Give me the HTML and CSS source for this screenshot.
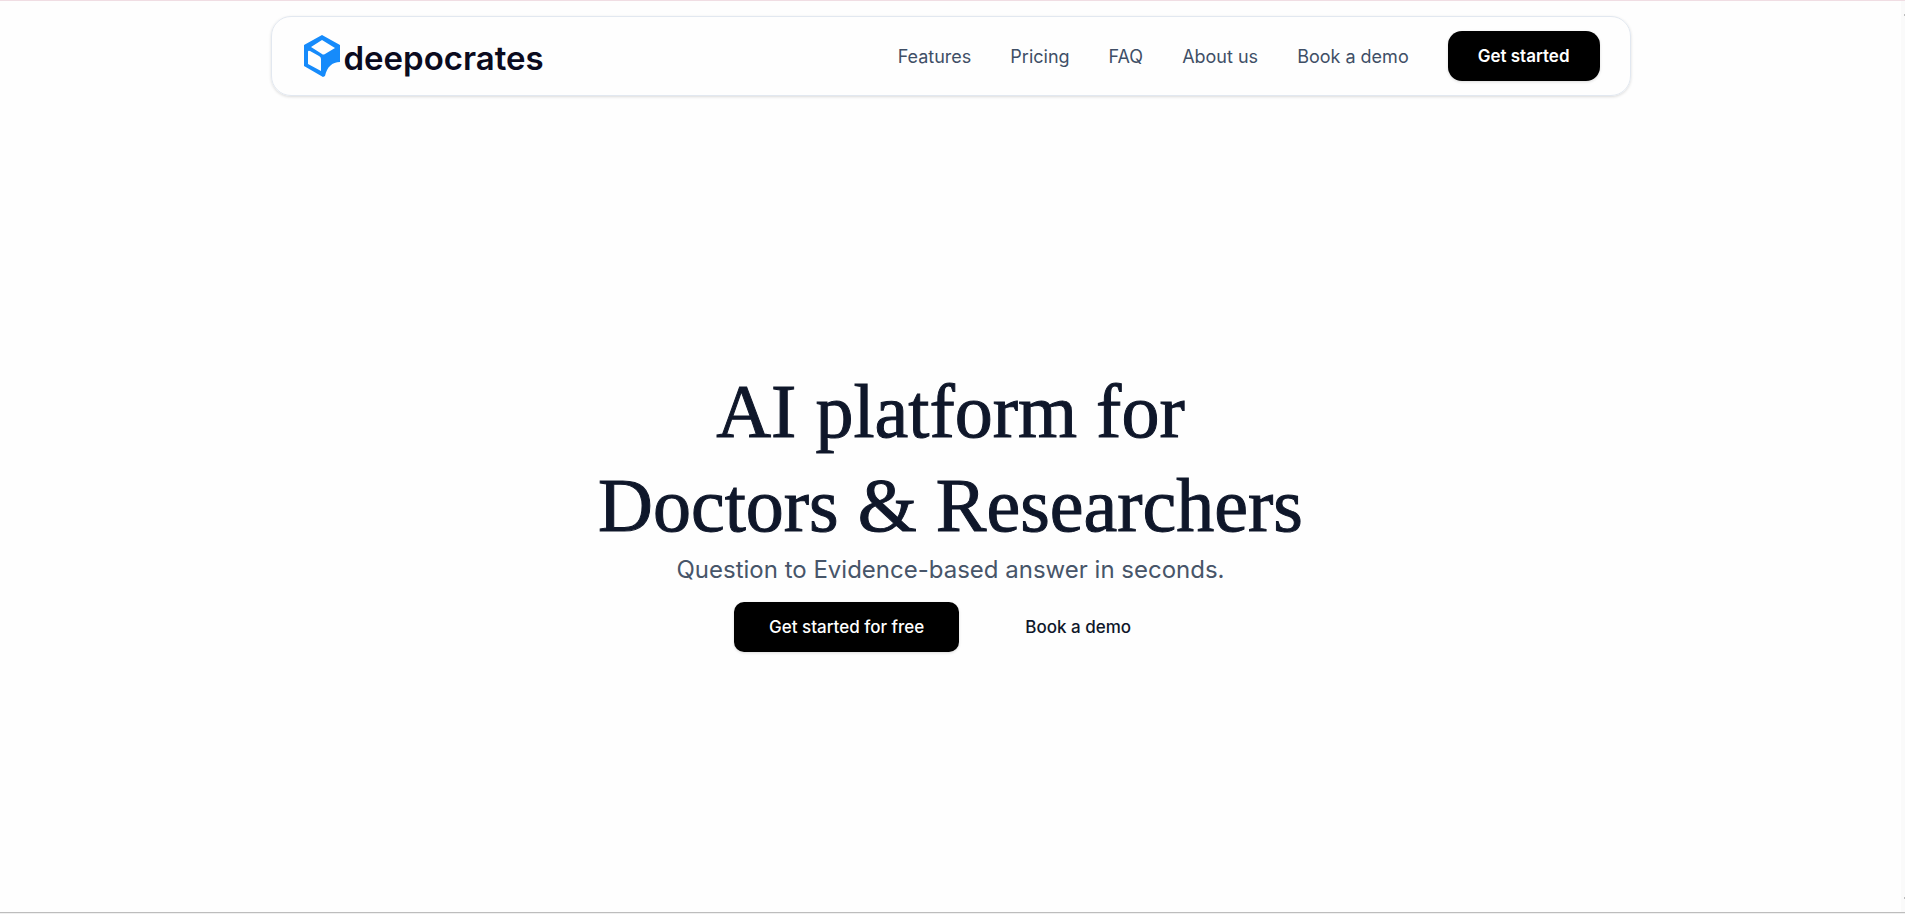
FILE: index.html
```html
<!DOCTYPE html>
<html lang="en">
<head>
  <meta charset="UTF-8">
  <title>Deepocrates</title>
  <meta name="viewport" content="width=device-width, initial-scale=1">
  <link rel="stylesheet" href="styles.css">
</head>
<body>

  <div class="page">
    <!-- Header -->
    <header class="navbar">
      <a href="#" class="logo">
        <svg class="logo-mark" viewBox="0 0 36 42" aria-hidden="true">
          <path fill="#168bfb" fill-rule="evenodd" d="M18 0 L36 10 V27 C28 27 23 32 21 41 L19 42 L0 31 V10 Z M18 5 L7 12 L18 19 Q19 20 21 19 L31 13 Z M4 17 V29 L17 36 V24 Q17 22 15 21 L6 16 Q4 15 4 17 Z"/>
        </svg>
        <span>deepocrates</span>
      </a>
      <nav class="nav-links">
        <a href="#features">Features</a>
        <a href="#pricing">Pricing</a>
        <a href="#faq">FAQ</a>
        <a href="#about">About us</a>
        <a href="#demo">Book a demo</a>
        <button class="btn btn-nav">Get started</button>
      </nav>
    </header>

    <!-- Hero -->
    <main class="hero">
      <h1>AI platform for<br>Doctors &amp; Researchers</h1>
      <p>Question to Evidence-based answer in seconds.</p>
      <div class="actions">
        <button class="btn">Get started for free</button>
        <a href="#demo" class="demo-link">Book a demo</a>
      </div>
    </main>
  </div>

  <div class="rail" aria-hidden="true"><i></i><i></i></div>

</body>
</html>
```
FILE: styles.css
```css
* {
  box-sizing: border-box;
}

body {
  margin: 0;
  min-height: 100vh;
  display: flex;
  font-family: Inter, "Liberation Sans", sans-serif;
  font-size: 18px;
  color: #0f172a;
  background: #fefefe;
  border-top: 1px solid #f0dde3;
  border-bottom: 1px solid #f0f0f0;
}

a {
  color: inherit;
  text-decoration: none;
}

.page {
  flex: 1;
  display: flex;
  flex-direction: column;
  padding: 15px 16px 0;
  border-bottom: 1px solid #bdbdbd;
}

.navbar {
  width: 100%;
  max-width: 1360px;
  height: 80px;
  margin: 0 auto;
  padding: 0 30px 0 32px;
  display: flex;
  align-items: center;
  justify-content: space-between;
  border: 1px solid #e2e8f0;
  border-radius: 20px;
  box-shadow: 0 1px 3px rgba(0, 0, 0, 0.14);
}

.logo {
  display: flex;
  align-items: flex-end;
  gap: 4px;
  font-size: 33px;
  line-height: 38px;
  font-weight: 600;
  color: #0b0b1e;
}

.logo-mark {
  width: 36px;
  height: 42px;
}

.nav-links {
  display: flex;
  align-items: center;
  gap: 39px;
  color: #3f4f66;
}

.btn {
  height: 50px;
  padding: 0 35px;
  border: none;
  border-radius: 10px;
  background: #000;
  color: #fff;
  font-family: inherit;
  font-size: 17px;
  font-weight: 500;
  cursor: pointer;
  box-shadow: 0 1px 3px rgba(0, 0, 0, 0.14);
}

.btn-nav {
  padding: 0 30px;
  border-radius: 14px;
  font-weight: 600;
}

.hero {
  flex: 1;
  display: flex;
  flex-direction: column;
  align-items: center;
  justify-content: center;
  padding-top: 8px;
  text-align: center;
}

h1 {
  margin: 0;
  font-family: "Liberation Serif", serif;
  font-size: 76px;
  line-height: 94px;
  font-weight: 400;
  -webkit-text-stroke: 1px #0f172a;
}

.hero p {
  margin: 0 0 14px;
  font-size: 24px;
  line-height: 36px;
  color: #475569;
}

.actions {
  display: flex;
  align-items: center;
  gap: 30px;
}

.demo-link {
  padding: 0 36px;
  font-size: 17px;
  font-weight: 500;
}

/* narrow scroll strip on the right edge */
.rail {
  width: 4px;
  padding: 13px 0;
  display: flex;
  flex-direction: column;
  justify-content: space-between;
  align-items: flex-end;
  background: #fafafa;
  border-bottom: 1px solid #bdbdbd;
}

.rail i {
  width: 1px;
  height: 2px;
  background: #bdbdbd;
}

@media (max-width: 900px) {
  .nav-links a {
    display: none;
  }

  h1 {
    font-size: 48px;
    line-height: 60px;
  }
}
```
